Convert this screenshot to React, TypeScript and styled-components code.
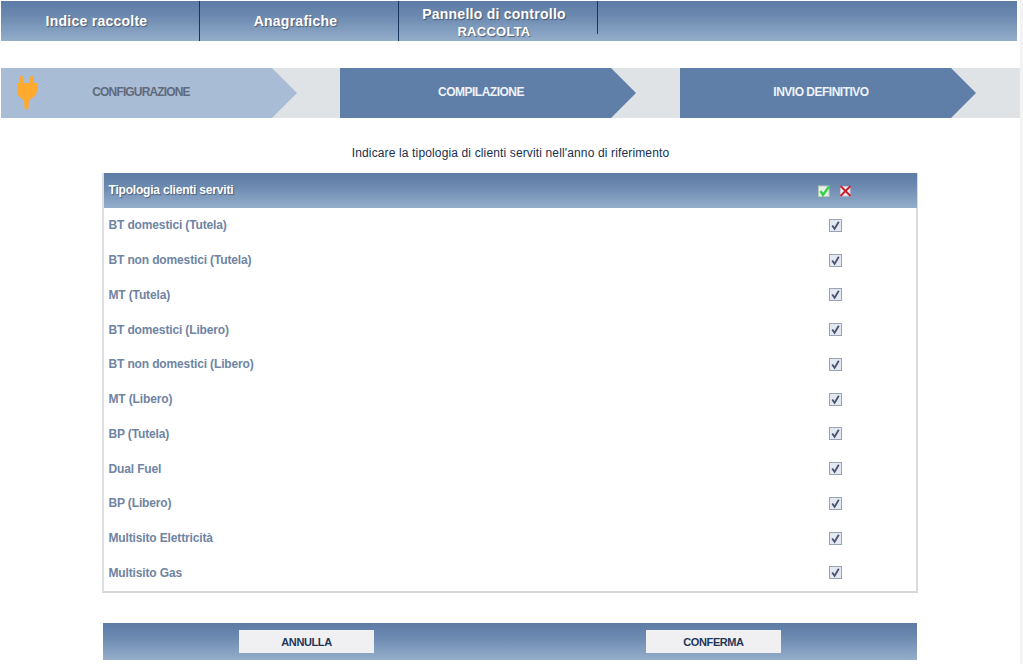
import React from "react";
import styled, { createGlobalStyle } from "styled-components";

const Global = createGlobalStyle`
  html, body { margin: 0; padding: 0; background: #fff; overflow: hidden; }
  body { font-family: "Liberation Sans", Arial, sans-serif; }
`;

const barGradient = "linear-gradient(to bottom, #5c7ca6 0%, #6d8ab0 40%, #94aecb 100%)";

const Page = styled.div`
  width: 1023px;
  height: 664px;
  overflow: hidden;
  box-sizing: border-box;
  padding-top: 1px;
  padding-left: 1px;
  border-right: 3px solid #f3f3f3;
`;

const Nav = styled.nav`
  width: 1016px;
  height: 40px;
  display: flex;
  background: ${barGradient};
`;

const NavItem = styled.div`
  width: 199px;
  height: 40px;
  box-sizing: border-box;
  border-right: 1px solid #17375e;
  padding-right: 7px;
  display: flex;
  align-items: center;
  justify-content: center;
  text-align: center;
  color: #fff;
  font-size: 14px;
  font-weight: bold;
  line-height: 17px;
  letter-spacing: 0.25px;
  text-shadow: 1px 1px 1px rgba(40, 50, 70, 0.6);
`;

const ShortNavItem = styled(NavItem)`
  border-right: none;
  position: relative;
  padding-top: 4px;
  padding-right: 9px;
  &::after {
    content: "";
    position: absolute;
    right: 0;
    top: 0;
    height: 33px;
    width: 1px;
    background: #17375e;
  }
`;

const NavSubLabel = styled.span`
  font-size: 13px;
`;

const Steps = styled.div`
  margin-top: 27px;
  display: flex;
  height: 50px;
  width: 1019px;
`;

const Step = styled.div<{ $w: number }>`
  width: ${(p) => p.$w}px;
  height: 50px;
  background: #dfe3e6;
  position: relative;
`;

const Arrow = styled.div<{ $active?: boolean }>`
  width: 296px;
  height: 50px;
  background: ${(p) => (p.$active ? "#a9bcd6" : "#5f7ea8")};
  clip-path: polygon(0 0, 271px 0, 296px 25px, 271px 50px, 0 50px);
  display: flex;
  align-items: center;
  justify-content: center;
  padding-right: ${(p) => (p.$active ? "16px" : "14px")};
  padding-bottom: 2px;
  box-sizing: border-box;
  font-size: 12px;
  font-weight: bold;
  letter-spacing: ${(p) => (p.$active ? "-0.85px" : "-0.5px")};
  color: ${(p) => (p.$active ? "#5f6a7c" : "#eef3f9")};
`;

const Plug = styled.svg`
  position: absolute;
  left: 14px;
  top: 7px;
  filter: blur(0.5px);
`;

const Intro = styled.p`
  margin: 28px 0 0;
  width: 1019px;
  text-align: center;
  font-size: 12px;
  line-height: 14px;
  letter-spacing: 0.14px;
  color: #17304f;
`;

const Card = styled.div`
  margin: 13px 0 0 101px;
  width: 816px;
  box-sizing: border-box;
  padding-bottom: 1px;
  border-left: 2px solid #dedfe2;
  border-right: 2px solid #d8dadd;
  border-bottom: 2px solid #d5d7da;
`;

const HeadRow = styled.div`
  height: 35px;
  margin-right: -1px;
  display: flex;
  align-items: center;
  background: ${barGradient};
  padding-left: 4.5px;
  color: #fff;
  font-size: 12px;
  font-weight: bold;
  letter-spacing: -0.2px;
  text-shadow: 1px 1px 1px rgba(40, 50, 70, 0.55);
`;

const HeadLabel = styled.span`
  flex: 1;
  padding-bottom: 2px;
`;

const HeadIcons = styled.div`
  width: 100px;
  display: flex;
  gap: 9px;
  padding-left: 1px;
  box-sizing: border-box;
`;

const Row = styled.div`
  height: 34.75px;
  display: flex;
  align-items: center;
  padding-left: 4.5px;
  font-size: 12px;
  font-weight: bold;
  letter-spacing: -0.14px;
  color: #6f84a3;
`;

const RowLabel = styled.span`
  flex: 1;
`;

const CheckCell = styled.div`
  width: 87px;
  display: flex;
`;

const Footer = styled.div`
  margin: 30px 0 0 102px;
  width: 814px;
  height: 37px;
  box-sizing: border-box;
  background: ${barGradient};
  display: flex;
  align-items: center;
  padding-left: 136px;
  gap: 272px;
`;

const FootButton = styled.button`
  width: 135px;
  height: 23px;
  border: none;
  padding: 0;
  background: #f0f0f2;
  color: #1f3658;
  font-family: inherit;
  font-size: 11px;
  font-weight: bold;
  letter-spacing: -0.4px;
`;

const CheckBox = () => (
  <svg width="13" height="13" viewBox="0 0 13 13">
    <rect x="0.5" y="0.5" width="12" height="12" fill="#e4e8f0" stroke="#98a3b6" />
    <path d="M3.2 6.4 L5.6 9.8 L9.8 2.8" fill="none" stroke="#46546f" strokeWidth="1.8" />
  </svg>
);

const GreenCheck = () => (
  <svg width="12" height="12" viewBox="0 0 12 12">
    <rect x="0.5" y="1" width="10.5" height="10.5" fill="#e8f0e8" stroke="#b9c9bb" />
    <path d="M2.5 6 L5 10 L11 1.5" fill="none" stroke="#37d24a" strokeWidth="2.4" />
  </svg>
);

const RedCross = () => (
  <svg width="13" height="12" viewBox="0 0 13 12">
    <rect x="1.5" y="1.5" width="9.5" height="9.500" fill="#eef0f4" stroke="#c7cbd4" />
    <path d="M1.5 1 L11.500 11 M11.500 1 L1.500 11" fill="none" stroke="#cc1f2d" strokeWidth="2" />
  </svg>
);

const PlugIcon = () => (
  <Plug width="24" height="36" viewBox="0 0 24 36">
    <path
      d="M5 1 L7.500 1 L8.500 8 L14.500 8 L15.500 1 L18 1 L19 8 L22 8 L22 15 C22 20 18 23 14 25 L13.500 33 C13 35 10 35 9.500 33 L9 25 C5 23 2 20 2 15 L2 8 L4 8 Z"
      fill="#ffa92e"
    />
  </Plug>
);

const rows = [
  "BT domestici (Tutela)",
  "BT non domestici (Tutela)",
  "MT (Tutela)",
  "BT domestici (Libero)",
  "BT non domestici (Libero)",
  "MT (Libero)",
  "BP (Tutela)",
  "Dual Fuel",
  "BP (Libero)",
  "Multisito Elettricità",
  "Multisito Gas",
];

export default function App() {
  return (
    <>
      <Global />
      <Page>
        <Nav>
          <NavItem>Indice raccolte</NavItem>
          <NavItem>Anagrafiche</NavItem>
          <ShortNavItem>
            <div>
              Pannello di controllo
              <br />
              <NavSubLabel>RACCOLTA</NavSubLabel>
            </div>
          </ShortNavItem>
        </Nav>
        <Steps>
          <Step $w={339}>
            <Arrow $active>CONFIGURAZIONE</Arrow>
            <PlugIcon />
          </Step>
          <Step $w={340}>
            <Arrow>COMPILAZIONE</Arrow>
          </Step>
          <Step $w={340}>
            <Arrow>INVIO DEFINITIVO</Arrow>
          </Step>
        </Steps>
        <Intro>Indicare la tipologia di clienti serviti nell'anno di riferimento</Intro>
        <Card>
          <HeadRow>
            <HeadLabel>Tipologia clienti serviti</HeadLabel>
            <HeadIcons>
              <GreenCheck />
              <RedCross />
            </HeadIcons>
          </HeadRow>
          {rows.map((r) => (
            <Row key={r}>
              <RowLabel>{r}</RowLabel>
              <CheckCell>
                <CheckBox />
              </CheckCell>
            </Row>
          ))}
        </Card>
        <Footer>
          <FootButton>ANNULLA</FootButton>
          <FootButton>CONFERMA</FootButton>
        </Footer>
      </Page>
    </>
  );
}
